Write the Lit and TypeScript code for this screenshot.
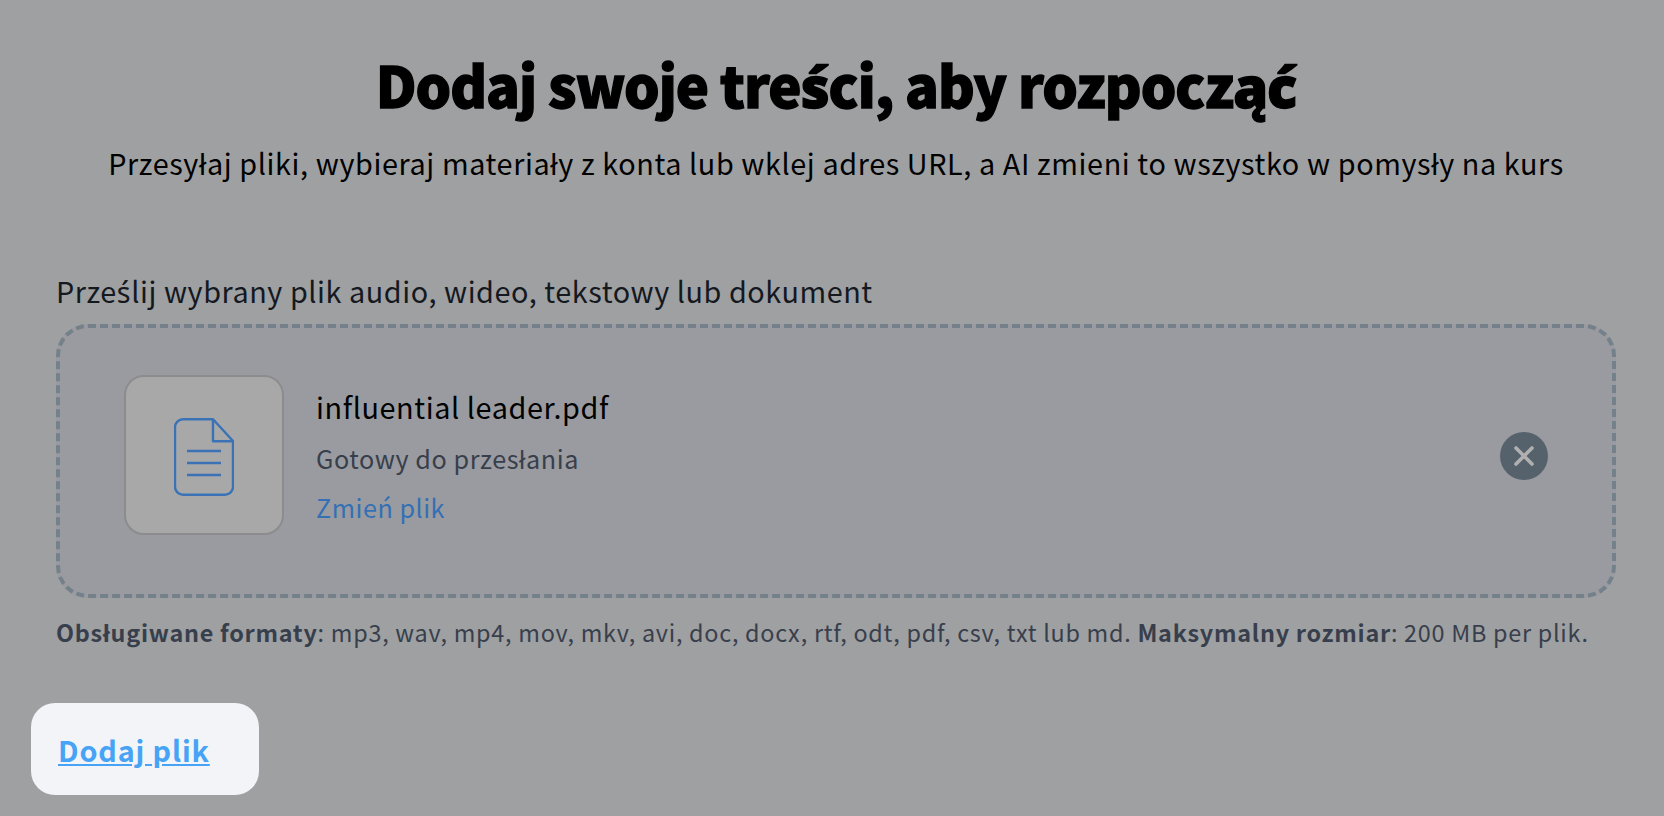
import { LitElement, html, css } from "lit";
import { customElement } from "lit/decorators.js";

@customElement("app-root")
export class AppRoot extends LitElement {
  static styles = css`
    :host {
      display: block;
      height: 816px;
      overflow: hidden;
      background: #9fa0a2;
      font-family: "Noto Sans CJK SC", "Noto Sans", sans-serif;
      color: #000;
    }
    .page {
      display: flex;
      flex-direction: column;
      height: 816px;
      box-sizing: border-box;
      padding: 44px 48px 21px 56px;
    }
    h1 {
      margin: 0;
      text-align: center;
      font-size: 56px;
      line-height: 80px;
      font-weight: 900;
      letter-spacing: -1px;
      -webkit-text-stroke: 1.3px #000;
      color: #000;
    }
    .alt {
      font-family: "Noto Sans", sans-serif;
    }
    .sub {
      margin: 17px 0 0;
      text-align: center;
      font-size: 28.8px;
      line-height: 40px;
      letter-spacing: 0.6px;
    }
    .label {
      margin: 88px 0 0;
      font-size: 28.8px;
      line-height: 40px;
      letter-spacing: 0.56px;
      color: #14181f;
    }
    .drop {
      margin-top: 12px;
      height: 274px;
      box-sizing: border-box;
      border: 4px dashed #74808a;
      border-radius: 32px;
      background: #9a9ba0;
      display: flex;
      align-items: center;
      padding: 0 64px 12px 64px;
    }
    .thumb {
      width: 160px;
      height: 160px;
      box-sizing: border-box;
      border: 2px solid #8c8c8e;
      border-radius: 20px;
      background: #a8a8a8;
      display: flex;
      align-items: center;
      justify-content: center;
      flex: none;
    }
    .thumb svg {
      margin-top: 4px;
    }
    .info {
      margin: 4px 0 0 32px;
      display: flex;
      flex-direction: column;
      flex: 1;
    }
    .name {
      font-size: 28.8px;
      line-height: 40px;
      letter-spacing: 0.6px;
    }
    .status {
      margin-top: 11px;
      font-size: 25.2px;
      line-height: 40px;
      letter-spacing: 0.56px;
      color: #383f4c;
    }
    .change {
      margin-top: 9px;
      font-size: 25.2px;
      line-height: 40px;
      letter-spacing: 0.5px;
      color: #3370b5;
    }
    .close {
      width: 48px;
      height: 48px;
      margin-top: 2px;
      border-radius: 50%;
      background: #55626c;
      display: flex;
      align-items: center;
      justify-content: center;
      flex: none;
    }
    .note {
      margin: 18px 0 0;
      font-size: 23.4px;
      line-height: 32px;
      letter-spacing: 0.73px;
      color: #383f4c;
      white-space: nowrap;
    }
    .note b {
      font-weight: 700;
    }
    .add {
      margin: auto 0 0 -25px;
      width: 228px;
      height: 92px;
      box-sizing: border-box;
      background: #f2f4f8;
      border-radius: 24px;
      display: flex;
      align-items: center;
      padding-left: 27px;
    }
    .add a {
      color: #46a3f5;
      font-size: 28.8px;
      font-weight: 700;
      letter-spacing: 0.85px;
      text-decoration: underline;
    }
  `;

  render() {
    return html`
      <div class="page">
        <h1>Dodaj swoje tre<span class="alt">ś</span>ci, aby rozpoczą<span class="alt">ć</span></h1>
        <p class="sub">Przesyłaj pliki, wybieraj materiały z konta lub wklej adres URL, a AI zmieni to wszystko w pomysły na kurs</p>
        <div class="label">Prze<span class="alt">ś</span>lij wybrany plik audio, wideo, tekstowy lub dokument</div>
        <div class="drop">
          <div class="thumb">
            <svg width="60" height="78" viewBox="0 0 60 78" fill="none" stroke="#3a72b5" stroke-width="2.4">
              <path d="M39 1.2H9a8 8 0 0 0-8 8v59.600a8 8 0 0 0 8 8h42a8 8 0 0 0 8-8V23L39 1.200Z" stroke-linejoin="round" />
              <path d="M39 1.200v22h20" stroke-linejoin="round" />
              <path d="M13 33h34M13 45h34M13 57h34" />
            </svg>
          </div>
          <div class="info">
            <div class="name">influential leader.pdf</div>
            <div class="status">Gotowy do przesłania</div>
            <div class="change">Zmień plik</div>
          </div>
          <div class="close">
            <svg width="22" height="22" viewBox="0 0 22 22" fill="none" stroke="#b0b0b0" stroke-width="3.6" stroke-linecap="round">
              <path d="M3 3l16 16M19 3L3 19" />
            </svg>
          </div>
        </div>
        <p class="note"><b>Obsługiwane formaty</b>: mp3, wav, mp4, mov, mkv, avi, doc, docx, rtf, odt, pdf, csv, txt lub md. <b>Maksymalny rozmiar</b>: 200 MB per plik.</p>
        <div class="add"><a href="#">Dodaj plik</a></div>
      </div>
    `;
  }
}
